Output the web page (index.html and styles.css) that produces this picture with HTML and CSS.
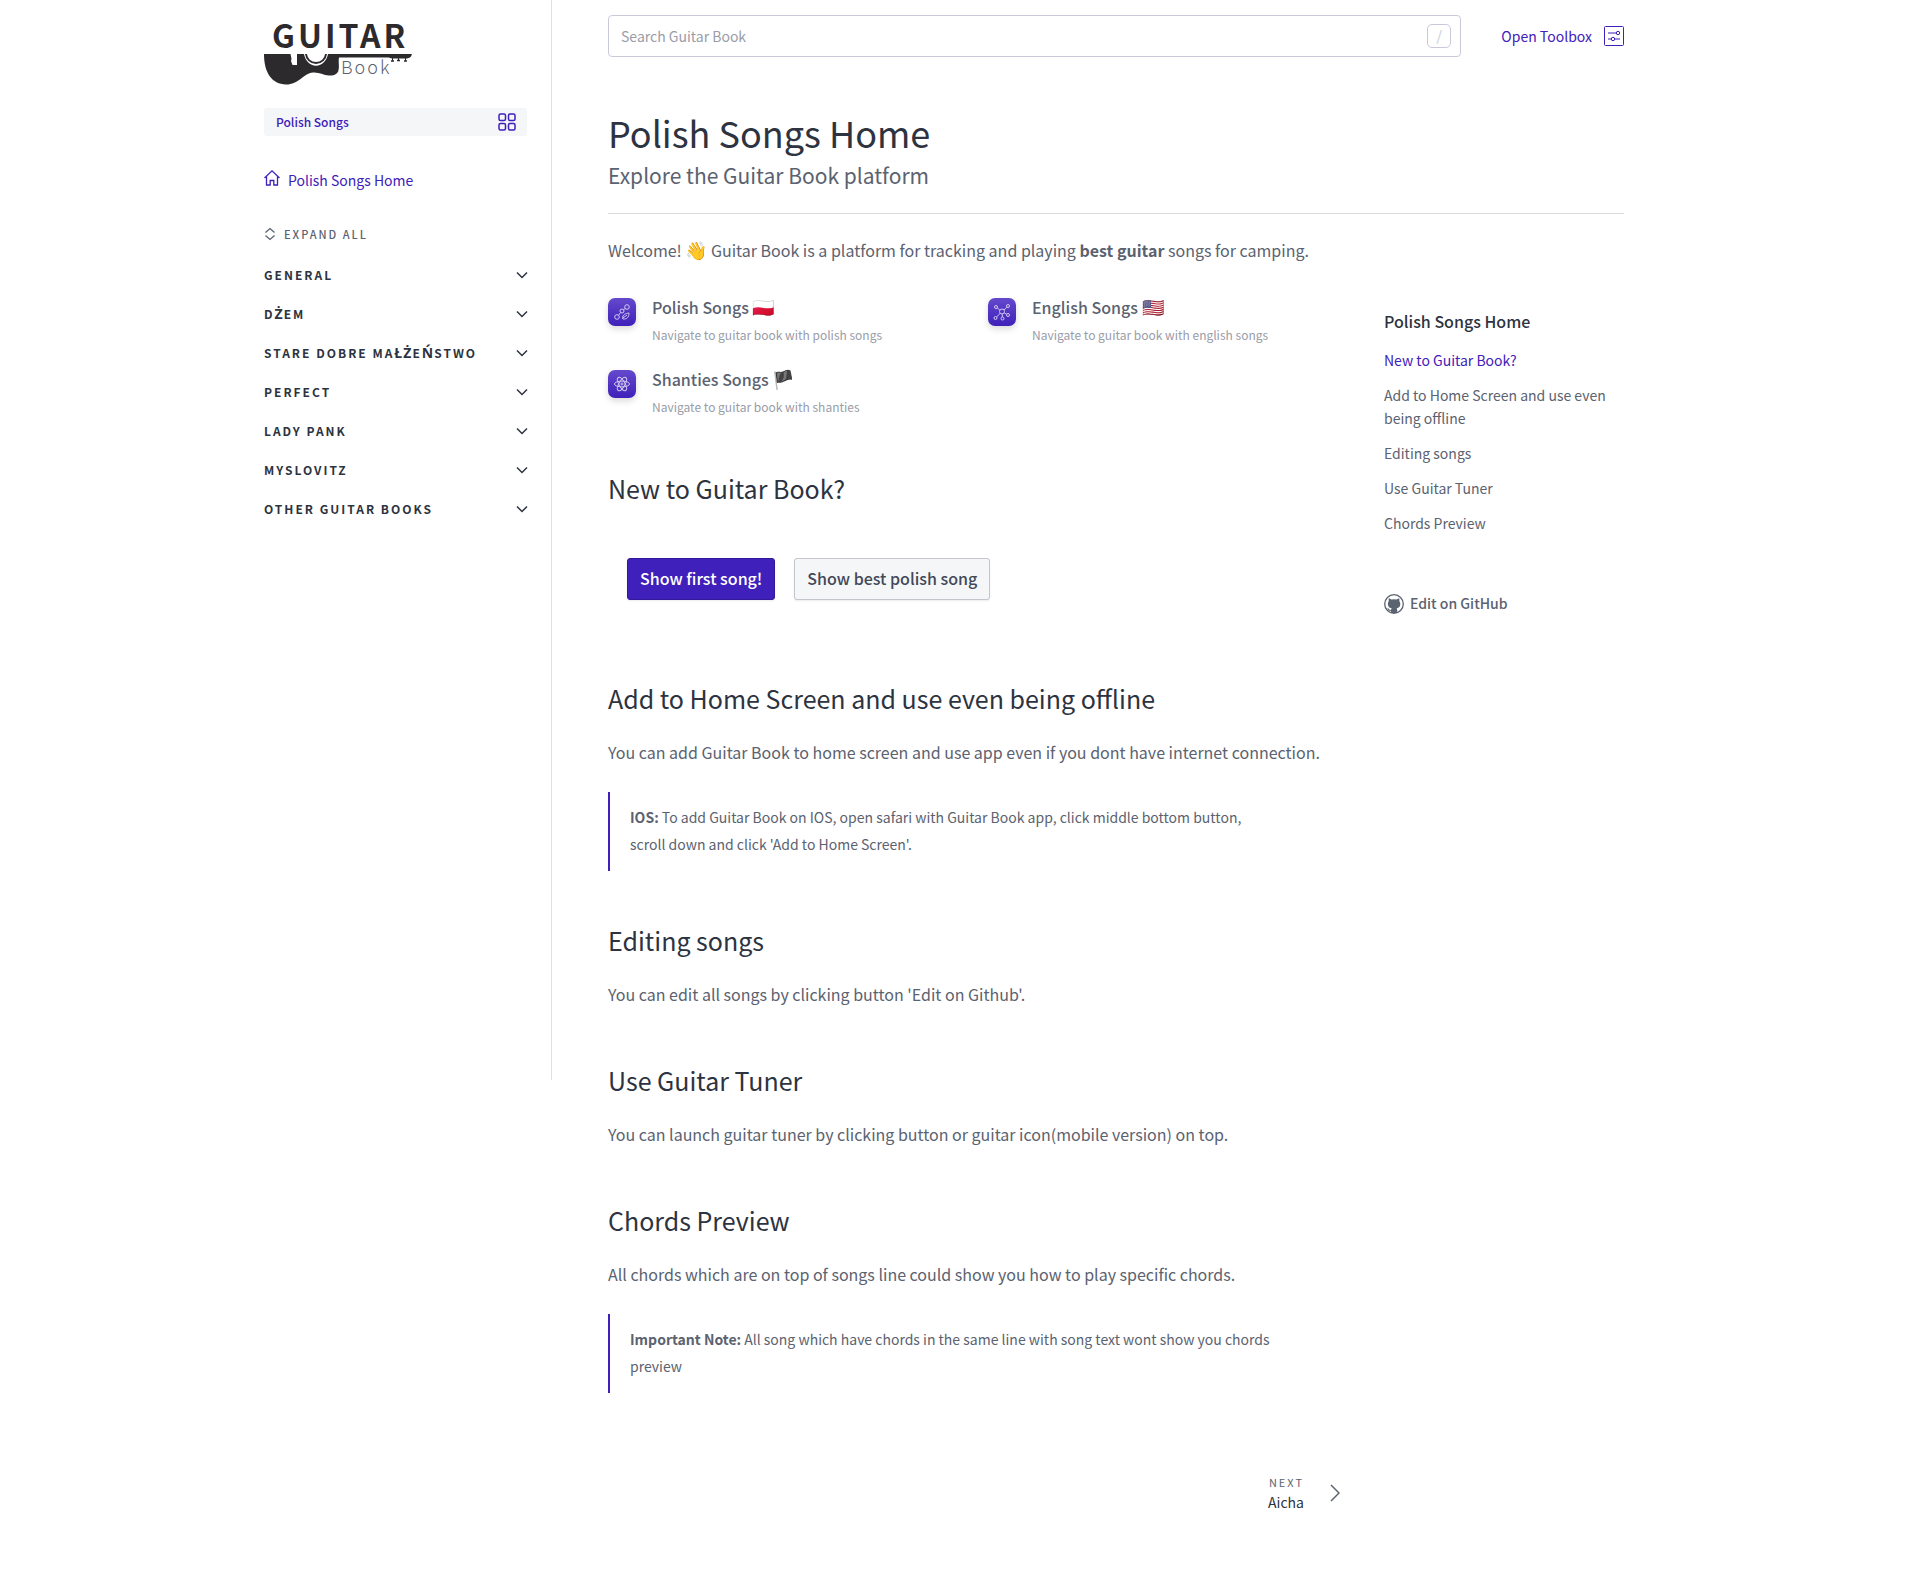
FILE: index.html
```html
<!DOCTYPE html>
<html lang="en">
<head>
    <meta charset="UTF-8">
    <meta name="viewport" content="width=device-width, initial-scale=1.0">
    <title>Polish Songs Home - Guitar Book</title>
    <link rel="stylesheet" href="styles.css">
</head>
<body>
    <!-- shared icons -->
    <svg class="sprite" aria-hidden="true">
        <symbol id="chevron" viewBox="0 0 12 12">
            <path d="M1 3.5l5 5 5-5" fill="none" stroke="currentColor" stroke-width="1.5"/>
        </symbol>
    </svg>

    <div class="layout">
        <aside class="sidebar">
            <a class="logo" href="#" aria-label="Guitar Book">
                <svg width="148" height="62" viewBox="0 0 148 62">
                    <text class="logo-title" x="8" y="25">GUITAR</text>
                    <path fill="#2d2a2e" d="M0 31h26.500l1 5-.5 2 1.500 4h4.500V31h7c1 6.500 6 11.700 12 11.700S63 37.500 64 31h84l-1 2.500c-1.500 1.500-3 2-6 2h-13l-3.500-1H75c-1 5 1 9-1 14.500-2 3-5 3.500-9 3.500-6-.5-10-3.500-16-3-10 1-14 12-27 12C8 61 0 50 0 31z"/>
                    <path fill="none" stroke="#2d2a2e" stroke-width="2" d="M42 31c.5 5 4.500 9 10 9s9.500-4 10-9"/>
                    <path stroke="#2d2a2e" d="M128.500 35v3M134.500 35v3M141.500 35v3"/>
                    <path stroke="#2d2a2e" stroke-width="1.500" d="M127 38h3M133 37.500h3M140 38h3"/>
                    <text class="logo-sub" x="77" y="51">Book</text>
                </svg>
            </a>

            <button class="switcher">
                <span>Polish Songs</span>
                <svg width="18" height="18" viewBox="0 0 18 18" fill="none" stroke="currentColor" stroke-width="1.500">
                    <rect x="1" y="1" width="6.500" height="6.500" rx="1.500"/>
                    <rect x="10.500" y="1" width="6.500" height="6.500" rx="1.500"/>
                    <rect x="1" y="10.500" width="6.500" height="6.500" rx="1.500"/>
                    <rect x="10.500" y="10.500" width="6.500" height="6.500" rx="1.500"/>
                </svg>
            </button>

            <a class="home-link" href="#">
                <svg width="16" height="16" viewBox="0 0 16 16" fill="none" stroke="currentColor" stroke-width="1.300">
                    <path d="M.5 8L8 .9 15.500 8"/>
                    <path d="M2.500 6.500V15h3.700v-4.500h3.600V15h3.700V6.500"/>
                </svg>
                <span>Polish Songs Home</span>
            </a>

            <button class="expand">
                <svg width="12" height="14" viewBox="0 0 12 14" fill="none" stroke="currentColor" stroke-width="1.300">
                    <path d="M1.500 5.500L6 1.500l4.500 4M1.500 8.500l4.500 4 4.500-4"/>
                </svg>
                <span>Expand all</span>
            </button>

            <nav class="nav">
                <button class="nav-item"><span>General</span><svg class="chevron"><use href="#chevron"/></svg></button>
                <button class="nav-item"><span>D<span class="ext">ż</span>em</span><svg class="chevron"><use href="#chevron"/></svg></button>
                <button class="nav-item"><span>Stare dobre ma<span class="ext">łż</span>e<span class="ext">ń</span>stwo</span><svg class="chevron"><use href="#chevron"/></svg></button>
                <button class="nav-item"><span>Perfect</span><svg class="chevron"><use href="#chevron"/></svg></button>
                <button class="nav-item"><span>Lady Pank</span><svg class="chevron"><use href="#chevron"/></svg></button>
                <button class="nav-item"><span>Myslovitz</span><svg class="chevron"><use href="#chevron"/></svg></button>
                <button class="nav-item"><span>Other guitar books</span><svg class="chevron"><use href="#chevron"/></svg></button>
            </nav>
        </aside>

        <div class="page">
            <header class="topbar">
                <label class="search">
                    <input type="text" placeholder="Search Guitar Book" aria-label="Search Guitar Book">
                    <kbd>/</kbd>
                </label>
                <a class="toolbox" href="#">
                    <span>Open Toolbox</span>
                    <svg width="20" height="20" viewBox="0 0 20 20" fill="none" stroke="currentColor">
                        <rect x=".5" y=".5" width="19" height="19" rx="1"/>
                        <path d="M4 7h8M4 13h3M11 13h5"/>
                        <circle cx="14" cy="7" r="1.700"/>
                        <circle cx="9" cy="13" r="1.700"/>
                    </svg>
                </a>
            </header>

            <div class="page-title">
                <h1>Polish Songs Home</h1>
                <p>Explore the Guitar Book platform</p>
            </div>

            <div class="columns">
                <main class="content">
                    <p>Welcome! <span class="emoji">👋</span> Guitar Book is a platform for tracking and playing <strong>best guitar</strong> songs for camping.</p>

                    <div class="tiles">
                        <a class="tile" href="#">
                            <span class="tile-icon">
                                <svg width="18" height="18" viewBox="0 0 18 18">
                                    <circle cx="14" cy="4" r="2.300"/><circle cx="9" cy="8" r="2"/><circle cx="4" cy="14" r="2.300"/>
                                    <path d="M10.500 6.500l2-1M5.500 12.200l2.200-2.700M9.500 15.500c0-4 3-5 6.500-5.500 0 4-2 6.500-6 6zM10 15l4-3"/>
                                </svg>
                            </span>
                            <span class="tile-text">
                                <span class="tile-title">Polish Songs <span class="emoji">🇵🇱</span></span>
                                <span class="tile-desc">Navigate to guitar book with polish songs</span>
                            </span>
                        </a>
                        <a class="tile" href="#">
                            <span class="tile-icon">
                                <svg width="18" height="18" viewBox="0 0 18 18">
                                    <circle cx="9" cy="8.500" r="2.500"/>
                                    <circle cx="3" cy="4" r="1.500"/><circle cx="15" cy="3" r="1.500"/><circle cx="2.500" cy="15" r="1.500"/><circle cx="9.500" cy="15.500" r="1.500"/><circle cx="15" cy="12" r="1.500"/>
                                    <path d="M4.200 5l2.600 2M11 7l2.800-2.800M3.600 13.900L7 10.500M9.300 14v-3M11.200 9.800l2.500 1.400"/>
                                </svg>
                            </span>
                            <span class="tile-text">
                                <span class="tile-title">English Songs <span class="emoji">🇺🇸</span></span>
                                <span class="tile-desc">Navigate to guitar book with english songs</span>
                            </span>
                        </a>
                        <a class="tile" href="#">
                            <span class="tile-icon">
                                <svg width="18" height="18" viewBox="0 0 18 18">
                                    <ellipse cx="9" cy="9" rx="7.500" ry="2.900"/>
                                    <ellipse cx="9" cy="9" rx="7.500" ry="2.900" transform="rotate(60 9 9)"/>
                                    <ellipse cx="9" cy="9" rx="7.500" ry="2.900" transform="rotate(120 9 9)"/>
                                    <circle cx="9" cy="9" r="1"/>
                                </svg>
                            </span>
                            <span class="tile-text">
                                <span class="tile-title">Shanties Songs <span class="emoji">🏴</span></span>
                                <span class="tile-desc">Navigate to guitar book with shanties</span>
                            </span>
                        </a>
                    </div>

                    <h2 id="new">New to Guitar Book?</h2>
                    <div class="actions">
                        <button class="btn btn-primary">Show first song!</button>
                        <button class="btn">Show best polish song</button>
                    </div>

                    <h2 id="offline">Add to Home Screen and use even being offline</h2>
                    <p>You can add Guitar Book to home screen and use app even if you dont have internet connection.</p>
                    <blockquote><strong>IOS:</strong> To add Guitar Book on IOS, open safari with Guitar Book app, click middle bottom button, scroll down and click 'Add to Home Screen'.</blockquote>

                    <h2 id="editing">Editing songs</h2>
                    <p>You can edit all songs by clicking button 'Edit on Github'.</p>

                    <h2 id="tuner">Use Guitar Tuner</h2>
                    <p>You can launch guitar tuner by clicking button or guitar icon(mobile version) on top.</p>

                    <h2 id="chords">Chords Preview</h2>
                    <p>All chords which are on top of songs line could show you how to play specific chords.</p>
                    <blockquote><strong>Important Note:</strong> All song which have chords in the same line with song text wont show you chords preview</blockquote>

                    <a class="next" href="#">
                        <span class="next-text">
                            <span class="next-label">Next</span>
                            <span class="next-title">Aicha</span>
                        </span>
                        <svg width="10" height="18" viewBox="0 0 10 18" fill="none" stroke="currentColor" stroke-width="1.500">
                            <path d="M1 1l8 8-8 8"/>
                        </svg>
                    </a>
                </main>

                <aside class="toc">
                    <h3>Polish Songs Home</h3>
                    <a class="toc-link active" href="#new">New to Guitar Book?</a>
                    <a class="toc-link" href="#offline">Add to Home Screen and use even being offline</a>
                    <a class="toc-link" href="#editing">Editing songs</a>
                    <a class="toc-link" href="#tuner">Use Guitar Tuner</a>
                    <a class="toc-link" href="#chords">Chords Preview</a>
                    <a class="github" href="#">
                        <svg width="20" height="20" viewBox="0 0 20 20">
                            <circle cx="10" cy="10" r="9.300" fill="none" stroke="currentColor" stroke-width="1.300"/>
                            <path fill="currentColor" d="M4.800 4.500c1 0 2 .5 2.700 1.100a9 9 0 0 1 5 0c.7-.6 1.700-1.100 2.700-1.100.4.900.4 1.700.1 2.500 1.300 1.700 1.300 4.200.2 5.700-.7.900-1.700 1.300-2.800 1.500.4.500.5 1 .5 1.700V19H7v-2.200c-2 .4-2.600-.8-3.200-1.800l-.8-.7c1-.3 1.700.3 2.200 1 .4.600 1 .8 1.900.5 0-.6.200-1.100.6-1.600-1.300-.2-2.400-.7-3.100-1.700-1-1.600-.9-3.900.2-5.500-.3-.8-.3-1.600 0-2.500z"/>
                        </svg>
                        <span>Edit on GitHub</span>
                    </a>
                </aside>
            </div>
        </div>
    </div>
</body>
</html>
```

FILE: styles.css
```css
* {
    box-sizing: border-box;
}
body {
    margin: 0;
    background-color: #fff;
    color: #5b6270;
    font-family: "Noto Sans CJK SC", "Open Sans", sans-serif;
    font-size: 16px;
    line-height: 28px;
}
a {
    color: inherit;
    text-decoration: none;
}
button {
    font-family: inherit;
    color: inherit;
    cursor: pointer;
}
h1, h2, h3, p, blockquote {
    margin: 0;
}
h1, h2 {
    color: #2d3340;
    font-weight: 400;
}
svg {
    flex: none;
}
.sprite {
    display: none;
}
.layout {
    display: flex;
    align-items: flex-start;
    max-width: 1392px;
    margin: 0 auto;
}

/* sidebar */
.sidebar {
    position: sticky;
    top: 0;
    display: flex;
    flex-direction: column;
    flex: none;
    width: 288px;
    height: 1080px;
    padding: 23px 24px 0 0;
    border-right: 1px solid #dfe0e4;
}
.logo {
    display: flex;
}
.logo svg {
    overflow: visible;
}
.logo-title {
    fill: #2d2a2e;
    font-size: 32px;
    font-weight: 700;
    letter-spacing: 3px;
}
.logo-sub {
    fill: #5b6270;
    font-size: 18px;
    font-weight: 300;
    letter-spacing: 2px;
}
.switcher {
    display: flex;
    align-items: center;
    justify-content: space-between;
    height: 28px;
    margin-top: 23px;
    padding: 0 11px 0 12px;
    border: none;
    border-radius: 3px;
    background-color: #f5f6f8;
    color: #3f20ba;
    font-size: 12px;
    font-weight: 500;
}
.switcher span {
    padding-bottom: 2px;
}
.home-link {
    display: flex;
    align-items: center;
    gap: 8px;
    margin-top: 30px;
    color: #3f20ba;
    font-size: 14px;
}
.home-link svg {
    margin-bottom: 4px;
}
.expand {
    display: flex;
    align-items: center;
    gap: 8px;
    margin-top: 30px;
    padding: 0;
    border: none;
    background: none;
    font-size: 11px;
    font-weight: 500;
    line-height: 20px;
    letter-spacing: 2px;
    text-transform: uppercase;
}
.nav {
    margin-top: 11px;
}
.nav-item {
    display: flex;
    align-items: center;
    justify-content: space-between;
    width: 100%;
    height: 39px;
    padding: 0;
    border: none;
    background: none;
    color: #2d3340;
    font-size: 12px;
    font-weight: 700;
    line-height: 20px;
    letter-spacing: 2px;
    text-transform: uppercase;
}
.ext {
    font-family: "Open Sans", sans-serif;
    font-size: 14px;
    letter-spacing: 1px;
}
.chevron {
    width: 12px;
    height: 12px;
    margin-right: -1px;
}

/* top bar */
.page {
    flex: 1;
    min-width: 0;
    padding: 0 32px 0 56px;
}
.topbar {
    display: flex;
    align-items: center;
    gap: 40px;
    height: 72px;
}
.search {
    display: flex;
    align-items: center;
    flex: 1;
    height: 42px;
    padding: 0 9px 0 12px;
    border: 1px solid #c9c9d9;
    border-radius: 4px;
}
.search input {
    flex: 1;
    min-width: 0;
    padding: 0;
    border: none;
    outline: none;
    font-family: inherit;
    font-size: 14px;
}
.search input::placeholder {
    color: #9a9ca8;
}
.search kbd {
    width: 24px;
    height: 24px;
    border: 1px solid #c9c9d9;
    border-radius: 5px;
    color: #c9c9d9;
    font-family: inherit;
    font-size: 14px;
    line-height: 21px;
    text-align: center;
}
.toolbox {
    display: flex;
    align-items: center;
    gap: 12px;
    color: #3f20ba;
    font-size: 14px;
}

/* content */
.page-title {
    padding: 36px 0 20px;
    border-bottom: 1px solid #d9dade;
}
.page-title h1 {
    margin-bottom: 1px;
    font-size: 36px;
    line-height: 48px;
}
.page-title p {
    font-size: 21px;
    line-height: 36px;
}
.columns {
    display: flex;
    gap: 40px;
    padding-top: 22px;
}
.content {
    flex: 1;
    min-width: 0;
}
strong {
    font-weight: 700;
}
.emoji {
    font-size: 18px;
    line-height: 1;
}
.content h2 {
    margin: 51px 0 22px;
    font-size: 25px;
    line-height: 36px;
}
.content p + h2 {
    margin-top: 54px;
}
.tiles {
    display: grid;
    grid-template-columns: 1fr 1fr;
    gap: 22px 24px;
    margin: 31px 0 53px;
}
.tile {
    display: flex;
    gap: 16px;
}
.tile-icon {
    display: flex;
    align-items: center;
    justify-content: center;
    width: 28px;
    height: 28px;
    margin-top: 3px;
    border-radius: 7px;
    background: linear-gradient(#6549cc, #3f20ba);
    box-shadow: 0 3px 6px rgba(0, 0, 0, 0.15);
}
.tile-icon svg {
    fill: none;
    stroke: #d0c8f0;
    stroke-width: 1;
}
.tile-text {
    display: flex;
    flex-direction: column;
    gap: 6px;
}
.tile-title {
    font-weight: 500;
    line-height: 24px;
}
.tile-desc {
    color: #9a9ca8;
    font-size: 12px;
    line-height: 20px;
}
.actions {
    display: flex;
    gap: 19px;
    padding: 30px 19px 29px;
}
.btn {
    height: 42px;
    padding: 0 12px 2px;
    border: 1px solid #c4c5cd;
    border-radius: 3px;
    background-color: #f5f6f8;
    color: #414857;
    font-size: 16px;
    font-weight: 500;
    box-shadow: 0 1px 2px rgba(0, 0, 0, 0.08);
}
.btn-primary {
    border-color: #32199b;
    background-color: #3f20ba;
    color: #fff;
}
blockquote {
    margin: 26px 0 0;
    padding: 12px 72px 13px 20px;
    border-left: 2px solid #3f20ba;
    font-size: 14px;
    line-height: 27px;
}
.next {
    display: flex;
    align-items: center;
    justify-content: flex-end;
    gap: 26px;
    margin: 80px 4px 64px 0;
}
.next-text {
    display: flex;
    flex-direction: column;
    align-items: flex-end;
}
.next-label {
    font-size: 11px;
    line-height: 18px;
    letter-spacing: 2px;
    text-transform: uppercase;
}
.next-title {
    color: #2d3340;
    font-size: 14px;
    line-height: 22px;
}

/* table of contents */
.toc {
    display: flex;
    flex-direction: column;
    align-items: flex-start;
    gap: 12px;
    width: 240px;
    padding-top: 74px;
    font-size: 14px;
    line-height: 23px;
}
.toc h3 {
    margin-bottom: 4px;
    color: #2d3340;
    font-size: 16px;
    font-weight: 500;
}
.toc-link.active {
    color: #3f20ba;
}
.github {
    display: flex;
    align-items: center;
    gap: 6px;
    margin-top: 45px;
    font-weight: 500;
}
```
